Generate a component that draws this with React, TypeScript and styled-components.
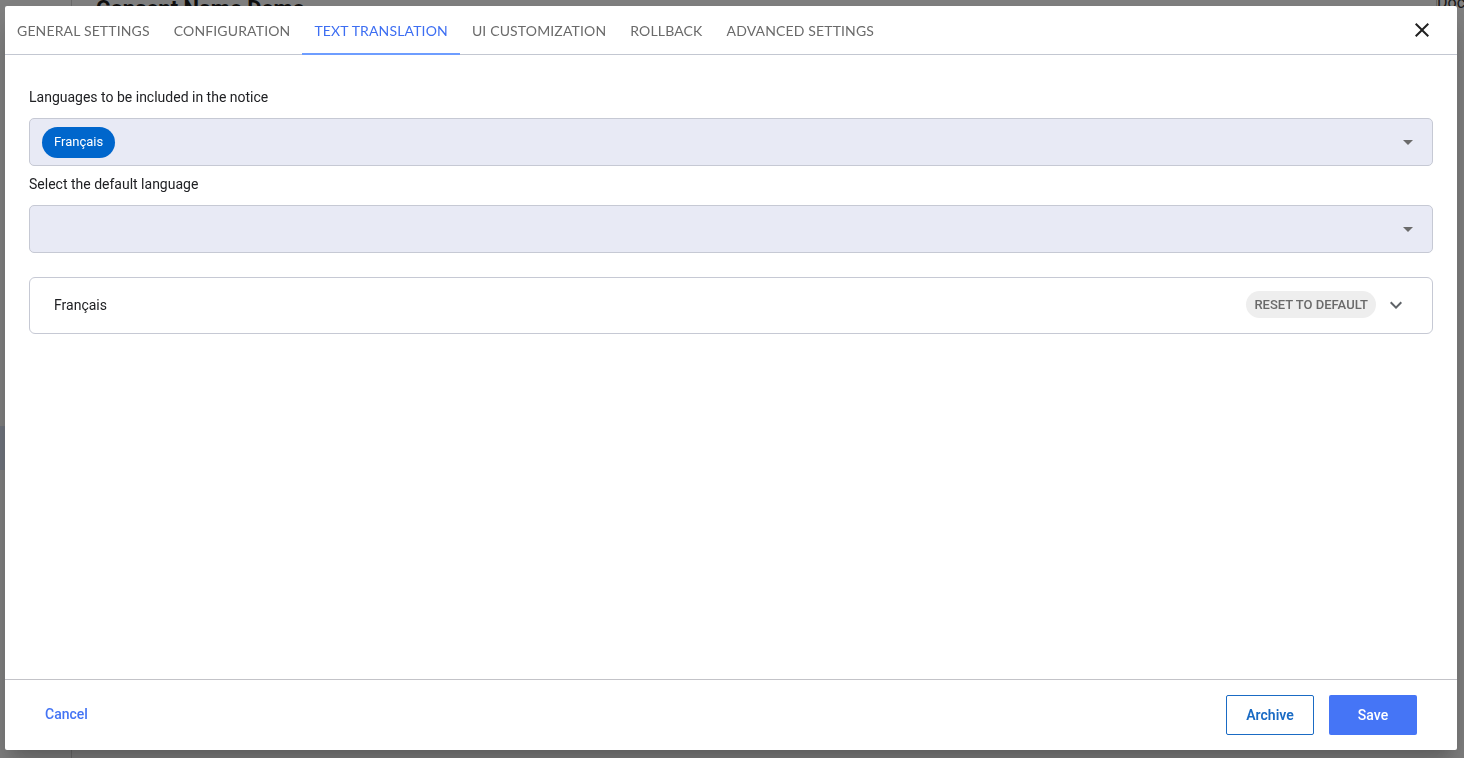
import React, { useState } from 'react';
import styled, { createGlobalStyle } from 'styled-components';

const GlobalStyle = createGlobalStyle`
  html, body {
    margin: 0;
    padding: 0;
    height: 100%;
    overflow: hidden;
    font-family: Roboto, 'Liberation Sans', sans-serif;
    background: #ffffff;
  }
  #root {
    height: 100%;
  }
  * {
    box-sizing: border-box;
  }
`;

const TABS = [
  'General settings',
  'Configuration',
  'Text translation',
  'UI customization',
  'Rollback',
  'Advanced settings',
];

function CloseIcon() {
  return (
    <svg width="24" height="24" viewBox="0 0 24 24" fill="#212121">
      <path d="M19 6.41 17.59 5 12 10.59 6.41 5 5 6.41 10.59 12 5 17.59 6.41 19 12 13.41 17.59 19 19 17.59 13.41 12z" />
    </svg>
  );
}

function DropArrow() {
  return (
    <svg width="24" height="24" viewBox="0 0 24 24" fill="#6b6b6b">
      <path d="M7 10l5 5 5-5z" />
    </svg>
  );
}

function ExpandMore() {
  return (
    <svg width="24" height="24" viewBox="0 0 24 24" fill="#5f6368">
      <path d="M16.59 8.59 12 13.17 7.41 8.59 6 10l6 6 6-6z" />
    </svg>
  );
}

export default function App() {
  const [active, setActive] = useState(2);

  return (
    <>
      <GlobalStyle />
      <Page>
        <SideRail>
          <RailItem />
        </SideRail>
        <PageMain>
          <PageTitle>Consent Name Demo</PageTitle>
          <PageAside>Docu</PageAside>
        </PageMain>
      </Page>

      <Backdrop>
        <Dialog>
          <TabBar>
            <TabList>
              {TABS.map((t, i) => (
                <Tab key={t} $active={i === active} onClick={() => setActive(i)}>
                  {t}
                </Tab>
              ))}
            </TabList>
            <CloseButton aria-label="close">
              <CloseIcon />
            </CloseButton>
          </TabBar>

          <Body>
            <FieldLabel>Languages to be included in the notice</FieldLabel>
            <SelectBox>
              <Chip>Français</Chip>
              <ArrowSlot>
                <DropArrow />
              </ArrowSlot>
            </SelectBox>

            <FieldLabel $gap={8}>Select the default language</FieldLabel>
            <SelectBox>
              <ArrowSlot>
                <DropArrow />
              </ArrowSlot>
            </SelectBox>

            <Accordion>
              <AccordionTitle>Français</AccordionTitle>
              <ResetButton>Reset to default</ResetButton>
              <ExpandSlot>
                <ExpandMore />
              </ExpandSlot>
            </Accordion>
          </Body>

          <Footer>
            <TextButton>Cancel</TextButton>
            <FooterActions>
              <OutlineButton>Archive</OutlineButton>
              <PrimaryButton>Save</PrimaryButton>
            </FooterActions>
          </Footer>
        </Dialog>
      </Backdrop>
    </>
  );
}

/* underlying page, dimmed by the backdrop */

const Page = styled.div`
  display: flex;
  height: 100%;
`;

const SideRail = styled.div`
  width: 72px;
  border-right: 1px solid #d6d6d6;
  display: flex;
  flex-direction: column;
  padding-top: 426px;
`;

const RailItem = styled.div`
  height: 44px;
  background: #dfe8fb;
`;

const PageMain = styled.div`
  flex: 1;
  display: flex;
  justify-content: space-between;
  align-items: flex-start;
`;

const PageTitle = styled.div`
  margin: -3px 0 0 24px;
  font-size: 22px;
  line-height: 24px;
  font-weight: 700;
  color: #1e1e1e;
`;

const PageAside = styled.div`
  margin-top: -6px;
  width: 28px;
  overflow: hidden;
  white-space: nowrap;
  border-left: 1px solid #cccccc;
  padding-left: 0;
  font-size: 16px;
  line-height: 18px;
  color: #333;
`;

/* modal */

const Backdrop = styled.div`
  position: fixed;
  inset: 0;
  background: rgba(0, 0, 0, 0.5);
  display: flex;
  align-items: flex-start;
  padding: 6px 0 0 5px;
`;

const Dialog = styled.div`
  width: 1452px;
  height: 744px;
  background: #ffffff;
  border-radius: 2px;
  display: flex;
  flex-direction: column;
  box-shadow: 0 11px 15px -7px rgba(0, 0, 0, 0.2), 0 24px 38px 3px rgba(0, 0, 0, 0.14);
`;

const TabBar = styled.div`
  display: flex;
  align-items: stretch;
  justify-content: space-between;
  height: 49px;
  border-bottom: 1px solid #c3c7d1;
  padding: 0 23px 0 0;
`;

const TabList = styled.div`
  display: flex;
  align-items: stretch;
`;

const Tab = styled.button<{ $active?: boolean }>`
  border: 0;
  background: transparent;
  padding: 1px 12px 0;
  margin-bottom: -1px;
  font-family: Lato, 'Open Sans', sans-serif;
  font-size: 14px;
  letter-spacing: 0.15px;
  text-transform: uppercase;
  color: ${(p) => (p.$active ? '#3d6ef2' : '#6a6a6a')};
  border-bottom: 2px solid ${(p) => (p.$active ? '#6e9dff' : 'transparent')};
  cursor: pointer;
`;

const CloseButton = styled.button`
  border: 0;
  background: transparent;
  padding: 0;
  display: flex;
  align-items: center;
  cursor: pointer;
`;

const Body = styled.div`
  flex: 1;
  padding: 32px 24px 0;
  display: flex;
  flex-direction: column;
`;

const FieldLabel = styled.div<{ $gap?: number }>`
  margin-top: ${(p) => p.$gap ?? 0}px;
  margin-bottom: 11px;
  font-size: 14px;
  line-height: 20px;
  color: #202124;
`;

const SelectBox = styled.div`
  height: 48px;
  border: 1px solid #c6c9d4;
  border-radius: 5px;
  background: #e8eaf5;
  display: flex;
  align-items: center;
  padding: 0 12px;
`;

const Chip = styled.span`
  height: 31px;
  display: inline-flex;
  align-items: center;
  padding: 0 12px 1px;
  border-radius: 16px;
  background: #0066cc;
  color: #ffffff;
  font-size: 13px;
`;

const ArrowSlot = styled.span`
  margin-left: auto;
  display: flex;
`;

const Accordion = styled.div`
  margin-top: 24px;
  height: 57px;
  border: 1px solid #c6c9d4;
  border-radius: 6px;
  display: flex;
  align-items: center;
  padding: 0 24px 2px;
`;

const AccordionTitle = styled.span`
  flex: 1;
  font-size: 14px;
  color: #202124;
`;

const ResetButton = styled.button`
  height: 27px;
  border: 0;
  border-radius: 14px;
  background: #eeeeee;
  padding: 0 8px;
  font-family: Roboto, 'Liberation Sans', sans-serif;
  font-size: 13px;
  font-weight: 500;
  text-transform: uppercase;
  color: #6a6a6a;
`;

const ExpandSlot = styled.span`
  display: flex;
  margin-left: 8px;
`;

const Footer = styled.div`
  height: 71px;
  border-top: 1px solid #c3c3c8;
  display: flex;
  align-items: center;
  justify-content: space-between;
  padding: 0 40px 0 24px;
`;

const FooterActions = styled.div`
  display: flex;
  gap: 15px;
`;

const TextButton = styled.button`
  border: 0;
  background: transparent;
  padding: 6px 16px 8px;
  font-family: Roboto, 'Liberation Sans', sans-serif;
  font-size: 14px;
  font-weight: 500;
  color: #4474f4;
`;

const OutlineButton = styled.button`
  width: 88px;
  height: 40px;
  border: 1px solid #1a6bc4;
  border-radius: 2px;
  background: #ffffff;
  font-family: Roboto, 'Liberation Sans', sans-serif;
  font-size: 14px;
  font-weight: 600;
  color: #1a6bc4;
`;

const PrimaryButton = styled.button`
  width: 88px;
  height: 40px;
  border: 0;
  border-radius: 2px;
  background: #4575f6;
  font-family: Roboto, 'Liberation Sans', sans-serif;
  font-size: 14px;
  font-weight: 500;
  color: #ffffff;
`;
